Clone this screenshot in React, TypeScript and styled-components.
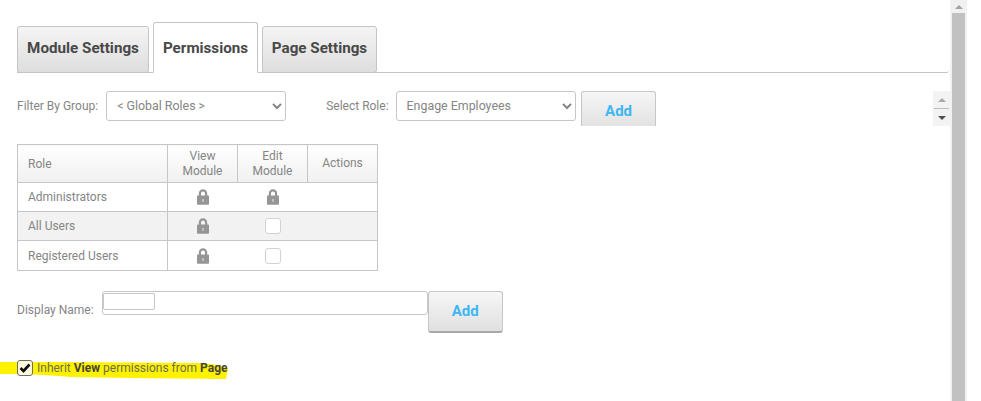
import React from "react";
import styled, { createGlobalStyle } from "styled-components";

const Global = createGlobalStyle`
  html, body { margin: 0; padding: 0; background: #fff; overflow: hidden; }
  body { font-family: Roboto, "Liberation Sans", sans-serif; font-size: 12px; color: #858585; }
  * { box-sizing: border-box; }
`;

const Page = styled.div`
  display: flex;
  width: 981px;
  height: 401px;
  overflow: hidden;
`;

const Main = styled.main`
  width: 950px;
  flex: none;
  padding: 22px 1px 0 17px;
`;

const TabStrip = styled.nav`
  display: flex;
  align-items: flex-end;
  gap: 4px;
  height: 51px;
  border-bottom: 1px solid #c4c4c4;
  border-bottom-right-radius: 3px;
`;

const Tab = styled.div<{ $active?: boolean; $width: number }>`
  display: flex;
  align-items: center;
  justify-content: center;
  width: ${(p) => p.$width}px;
  height: ${(p) => (p.$active ? 51 : 47)}px;
  padding: ${(p) => (p.$active ? "1px 0 0" : "0 0 4px")};
  margin-bottom: -1px;
  border: 1px solid #c4c4c4;
  border-bottom: ${(p) => (p.$active ? "1px solid #fff" : "1px solid #c4c4c4")};
  border-radius: 3px 3px ${(p) => (p.$active ? "0 0" : "3px 3px")};
  background: ${(p) => (p.$active ? "#fff" : "linear-gradient(#f4f4f4, #dedede)")};
  font-size: 15.2px;
  font-weight: 700;
  color: #484848;
  white-space: nowrap;
`;

const FilterRow = styled.section`
  display: flex;
  align-items: flex-start;
  margin-top: 18px;
  height: 35px;
`;

const FieldLabel = styled.label<{ $gap: number; $start?: number }>`
  display: block;
  margin-left: ${(p) => p.$start ?? 0}px;
  margin-right: ${(p) => p.$gap}px;
  line-height: 30px;
  font-size: 12px;
  color: #858585;
  white-space: nowrap;
`;

const RoleSelect = styled.select`
  width: 180px;
  height: 30px;
  padding: 0 6px 2px;
  border: 1px solid #c6c6c6;
  border-radius: 3px;
  background-color: #fff;
  font-family: Roboto, "Liberation Sans", sans-serif;
  font-size: 12.4px;
  color: #858585;
  outline: none;
`;

const ClippedAdd = styled.button`
  width: 75px;
  height: 35px;
  margin-left: 5px;
  padding: 3px 0 0 1px;
  border: 1px solid #c6c6c6;
  border-bottom: 0;
  border-radius: 3px 3px 0 0;
  background: linear-gradient(#f6f6f6, #e2e2e2);
  font-family: Roboto, "Liberation Sans", sans-serif;
  font-size: 15px;
  font-weight: 700;
  color: #3db7f2;
`;

const MiniScroll = styled.div`
  display: flex;
  flex-direction: column;
  width: 17px;
  height: 35px;
  margin-left: auto;
  margin-right: -1px;
  padding: 0 1px;
  background: #f3f3f3;
`;

const MiniButton = styled.div<{ $down?: boolean }>`
  flex: 1;
  display: flex;
  align-items: center;
  justify-content: center;
  &:first-child { border-bottom: 1px solid #bdbdbd; }
  &::after {
    content: "";
    width: 0;
    height: 0;
    border-left: 4px solid transparent;
    border-right: 4px solid transparent;
    ${(p) =>
      p.$down
        ? "border-top: 4px solid #505050;"
        : "border-bottom: 4px solid #a8a8a8;"}
  }
`;

const RoleTable = styled.table`
  width: 360px;
  margin-top: 18px;
  border-collapse: collapse;
  table-layout: fixed;
  border: 1px solid #c6c6c6;
`;

const HeadCell = styled.th<{ $left?: boolean; $w: number }>`
  width: ${(p) => p.$w}px;
  height: 38px;
  padding: ${(p) => (p.$left ? "2px 0 0 10px" : "0")};
  border: 1px solid #c6c6c6;
  background: linear-gradient(#fff, #f0f0f0);
  font-weight: 400;
  font-size: 12px;
  line-height: 15px;
  color: #858585;
  text-align: ${(p) => (p.$left ? "left" : "center")};
`;

const Row = styled.tr<{ $alt?: boolean; $h: number }>`
  height: ${(p) => p.$h}px;
  background: ${(p) => (p.$alt ? "#f2f2f2" : "#fff")};
  border-bottom: 1px solid #c6c6c6;
`;

const NameCell = styled.td`
  padding: 0 0 0 10px;
  border-right: 1px solid #c6c6c6;
  font-size: 12px;
  color: #858585;
`;

const IconCell = styled.td`
  padding: 0;
  text-align: center;
  vertical-align: middle;
  line-height: 0;
`;

const EmptyBox = styled.span`
  display: inline-block;
  width: 16px;
  height: 16px;
  border: 1px solid #d2d2d2;
  border-radius: 3px;
  background: #fff;
`;

const NameRow = styled.section`
  display: flex;
  align-items: flex-start;
  margin-top: 20px;
`;

const NameLabel = styled.label`
  display: block;
  margin: 12px 8px 0 0;
  font-size: 12px;
  line-height: 15px;
  color: #858585;
`;

const InputShell = styled.div`
  width: 326px;
  height: 24px;
  padding: 1px 0 0 0;
  border: 1px solid #c6c6c6;
  border-radius: 3px;
  background: #fff;
`;

const InnerInput = styled.input`
  display: block;
  width: 52px;
  height: 17px;
  padding: 0;
  border: 1px solid #c6c6c6;
  border-radius: 2px;
  background: #fff;
  outline: none;
`;

const AddButton = styled.button`
  width: 75px;
  height: 42px;
  padding: 0 0 1px;
  border: 1px solid #c6c6c6;
  border-bottom: 2px solid #a8a8a8;
  border-radius: 3px;
  background: linear-gradient(#f6f6f6, #e0e0e0);
  font-family: Roboto, "Liberation Sans", sans-serif;
  font-size: 15px;
  font-weight: 700;
  color: #3db7f2;
`;

const InheritRow = styled.section`
  position: relative;
  display: flex;
  align-items: center;
  gap: 4px;
  margin-top: 27px;
  height: 16px;
  font-size: 12px;
  color: #6e6e50;
`;

const Marker = styled.svg`
  position: absolute;
  left: -17px;
  top: 0;
  width: 240px;
  height: 22px;
`;

const CheckBox = styled.span`
  position: relative;
  display: flex;
  align-items: center;
  justify-content: center;
  width: 16px;
  height: 16px;
  border: 1px solid #6e6e62;
  border-radius: 3px;
  background: #fffbe0;
`;

const InheritText = styled.span`
  position: relative;
  white-space: nowrap;
  b { color: #45453a; font-weight: 700; }
`;

const ScrollTrack = styled.aside`
  display: flex;
  flex-direction: column;
  width: 17px;
  height: 401px;
  background: #f1f1f1;
`;

const ScrollArrow = styled.div`
  display: flex;
  align-items: center;
  justify-content: center;
  height: 13px;
  flex: none;
  &::after {
    content: "";
    width: 0;
    height: 0;
    border-left: 4px solid transparent;
    border-right: 4px solid transparent;
    border-bottom: 4px solid #a3a3a3;
  }
`;

const ScrollThumb = styled.div`
  flex: 1;
  margin: 0 2px;
  background: #c1c1c1;
`;

const Lock = () => (
  <svg width="12" height="16" viewBox="0 0 12 16" aria-hidden="true" style={{ verticalAlign: "middle" }}>
    <path
      fill="#959595"
      fillRule="evenodd"
      d="M1.800 6.500V4.500C1.800 2 3.600.2 6 .2s4.200 1.800 4.200 4.300v2h1c.5 0 .8.3.8.8v7.700c0 .5-.3.8-.8.8H.8c-.5 0-.8-.3-.8-.8V7.300c0-.5.3-.8.8-.8h1zm2.200 0h4V4.600C8 3.300 7.200 2.400 6 2.400s-2 .9-2 2.200v1.900z"
    />
    <rect x="5.300" y="10" width="1.400" height="3" fill="#d0d0d0" />
  </svg>
);

const Check = () => (
  <svg width="12" height="10" viewBox="0 0 12 10" aria-hidden="true">
    <path d="M1.500 5l3 3L10.500 1.500" fill="none" stroke="#111" strokeWidth="2.600" />
  </svg>
);

const rows = [
  { name: "Administrators", edit: "lock", h: 29 },
  { name: "All Users", edit: "box", h: 29 },
  { name: "Registered Users", edit: "box", h: 30 },
];

export default function App() {
  return (
    <Page>
      <Global />
      <Main>
        <TabStrip>
          <Tab $width={132}>Module Settings</Tab>
          <Tab $width={105} $active>Permissions</Tab>
          <Tab $width={115}>Page Settings</Tab>
        </TabStrip>

        <FilterRow>
          <FieldLabel $gap={8}>Filter By Group:</FieldLabel>
          <RoleSelect defaultValue="global">
            <option value="global">&lt; Global Roles &gt;</option>
          </RoleSelect>
          <FieldLabel $gap={7} $start={40}>Select Role:</FieldLabel>
          <RoleSelect defaultValue="engage">
            <option value="engage">Engage Employees</option>
          </RoleSelect>
          <ClippedAdd>Add</ClippedAdd>
          <MiniScroll>
            <MiniButton />
            <MiniButton $down />
          </MiniScroll>
        </FilterRow>

        <RoleTable>
          <thead>
            <tr>
              <HeadCell $left $w={150}>Role</HeadCell>
              <HeadCell $w={70}>View<br />Module</HeadCell>
              <HeadCell $w={70}>Edit<br />Module</HeadCell>
              <HeadCell $w={70}>Actions</HeadCell>
            </tr>
          </thead>
          <tbody>
            {rows.map((r, i) => (
              <Row key={r.name} $alt={i === 1} $h={r.h}>
                <NameCell>{r.name}</NameCell>
                <IconCell><Lock /></IconCell>
                <IconCell>
                  {r.edit === "lock" ? <Lock /> : <EmptyBox />}
                </IconCell>
                <IconCell />
              </Row>
            ))}
          </tbody>
        </RoleTable>

        <NameRow>
          <NameLabel>Display Name:</NameLabel>
          <InputShell>
            <InnerInput />
          </InputShell>
          <AddButton>Add</AddButton>
        </NameRow>

        <InheritRow>
          <Marker viewBox="0 0 240 22" aria-hidden="true">
            <path d="M0 2 L60 2 L200 3 C215 4 224 6 228 9 L226 19 L130 18 L70 17 C50 15 30 14 0 14 Z" fill="#fff200" />
          </Marker>
          <CheckBox><Check /></CheckBox>
          <InheritText>Inherit <b>View</b> permissions from <b>Page</b></InheritText>
        </InheritRow>
      </Main>
      <ScrollTrack>
        <ScrollArrow />
        <ScrollThumb />
      </ScrollTrack>
    </Page>
  );
}
